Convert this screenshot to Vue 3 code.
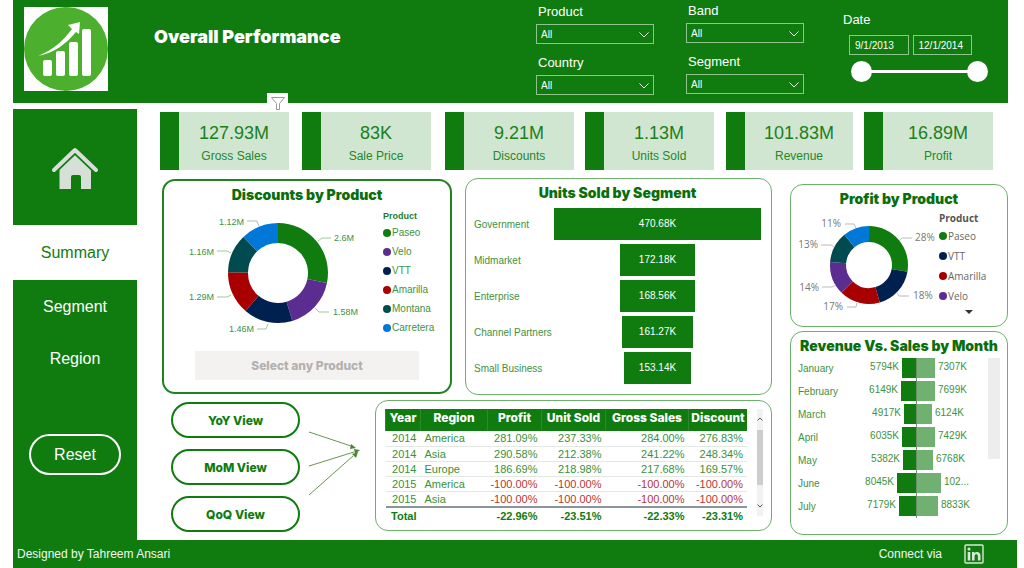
<script setup>
import { ref } from 'vue'

const colors = {
  Paseo: '#107c10',
  Velo: '#5c2d91',
  VTT: '#002050',
  Amarilla: '#a80000',
  Montana: '#004b50',
  Carretera: '#0078d7'
}

const filters = [
  [{ id: 'product', label: 'Product' }, { id: 'country', label: 'Country' }],
  [{ id: 'band', label: 'Band' }, { id: 'segment', label: 'Segment' }]
]

const from = ref('9/1/2013')
const to = ref('12/1/2014')

const kpis = [
  { value: '127.93M', label: 'Gross Sales' },
  { value: '83K', label: 'Sale Price' },
  { value: '9.21M', label: 'Discounts' },
  { value: '1.13M', label: 'Units Sold' },
  { value: '101.83M', label: 'Revenue' },
  { value: '16.89M', label: 'Profit' }
]

function slices(items, cx, cy, outer, inner) {
  const total = items.reduce((sum, item) => sum + item.value, 0)
  let angle = -Math.PI / 2
  const point = (r, a) => `${(cx + r * Math.cos(a)).toFixed(2)} ${(cy + r * Math.sin(a)).toFixed(2)}`
  return items.map((item) => {
    const end = angle + (item.value / total) * Math.PI * 2
    const d = `M${point(outer, angle)}A${outer} ${outer} 0 0 1 ${point(outer, end)}L${point(inner, end)}A${inner} ${inner} 0 0 0 ${point(inner, angle)}Z`
    angle = end
    return { ...item, d, fill: colors[item.name] }
  })
}

const discounts = slices([
  { name: 'Paseo', value: 2.6, text: '2.6M', x: 170, y: 36, anchor: 'start', line: '154,36 158,33 167,33' },
  { name: 'Velo', value: 1.58, text: '1.58M', x: 169, y: 110, anchor: 'start', line: '151,103 155,107 165,107' },
  { name: 'VTT', value: 1.46, text: '1.46M', x: 90, y: 127, anchor: 'end', line: '104,119 102,124 93,124' },
  { name: 'Amarilla', value: 1.29, text: '1.29M', x: 50, y: 95, anchor: 'end', line: '67,90 63,92 53,92' },
  { name: 'Montana', value: 1.16, text: '1.16M', x: 50, y: 50, anchor: 'end', line: '67,48 63,46 53,46' },
  { name: 'Carretera', value: 1.12, text: '1.12M', x: 80, y: 20, anchor: 'end', line: '95,21 93,16 83,16' }
], 114, 68, 50, 30)

const profits = slices([
  { name: 'Paseo', value: 28, text: '28%', x: 124, y: 34, anchor: 'start', line: '108,34 111,31 121,31' },
  { name: 'VTT', value: 18, text: '18%', x: 122, y: 92, anchor: 'start', line: '106,86 108,89 118,89' },
  { name: 'Amarilla', value: 17, text: '17%', x: 52, y: 103, anchor: 'end', line: '66,96 65,100 56,100' },
  { name: 'Velo', value: 14, text: '14%', x: 28, y: 84, anchor: 'end', line: '45,78 41,80 31,80' },
  { name: 'Montana', value: 13, text: '13%', x: 27, y: 41, anchor: 'end', line: '43,40 40,38 30,38' },
  { name: 'Carretera', value: 11, text: '11%', x: 50, y: 20, anchor: 'end', line: '65,21 63,17 54,17' }
], 78, 58, 39, 23)

const segments = [
  { name: 'Government', value: 470.68 },
  { name: 'Midmarket', value: 172.18 },
  { name: 'Enterprise', value: 168.56 },
  { name: 'Channel Partners', value: 161.27 },
  { name: 'Small Business', value: 153.14 }
]

const months = [
  { name: 'January', revenue: 5794, sales: 7307 },
  { name: 'February', revenue: 6149, sales: 7699 },
  { name: 'March', revenue: 4917, sales: 6124 },
  { name: 'April', revenue: 6035, sales: 7429 },
  { name: 'May', revenue: 5382, sales: 6768 },
  { name: 'June', revenue: 8045, sales: 10200, salesText: '102...' },
  { name: 'July', revenue: 7179, sales: 8833 }
]
const barWidth = (value) => `${Math.round(value / 417)}px`

const headers = ['Year', 'Region', 'Profit', 'Unit Sold', 'Gross Sales', 'Discount']
const rows = [
  ['2014', 'America', '281.09%', '237.33%', '284.00%', '276.83%'],
  ['2014', 'Asia', '290.58%', '212.38%', '241.22%', '248.34%'],
  ['2014', 'Europe', '186.69%', '218.98%', '217.68%', '169.57%'],
  ['2015', 'America', '-100.00%', '-100.00%', '-100.00%', '-100.00%'],
  ['2015', 'Asia', '-100.00%', '-100.00%', '-100.00%', '-100.00%']
]
const totals = ['Total', '', '-22.96%', '-23.51%', '-22.33%', '-23.31%']
const views = ['YoY View', 'MoM View', 'QoQ View']
</script>

<template>
  <div class="page">
    <header class="top">
      <svg class="logo" viewBox="0 0 84 84" aria-hidden="true">
        <rect width="84" height="84" fill="#fdfdfd" />
        <circle cx="42" cy="42" r="42" fill="#4caf2e" />
        <g fill="#fff">
          <rect x="19" y="53" width="9" height="16" rx="2" />
          <rect x="32" y="44" width="9" height="25" rx="2" />
          <rect x="45" y="35" width="9" height="34" rx="2" />
          <rect x="58" y="22" width="9" height="47" rx="2" />
          <path d="M14 49C29 43 39 34 48 22L44 18L56 15L55 27L52 25C42 37 30 46 14 49Z" />
        </g>
      </svg>
      <h1>Overall Performance</h1>
      <div class="filters">
        <div v-for="(column, i) in filters" :key="i" class="filter-column">
          <div v-for="filter in column" :key="filter.id" class="filter">
            <label :for="filter.id">{{ filter.label }}</label>
            <div class="select-wrap">
              <select :id="filter.id"><option>All</option></select>
              <svg viewBox="0 0 10 6" aria-hidden="true"><path d="M0.5 0.5L5 5L9.5 0.5" fill="none" stroke="#fff" /></svg>
            </div>
          </div>
        </div>
      </div>
      <div class="date">
        <label for="from">Date</label>
        <div class="date-inputs">
          <input id="from" v-model="from" type="text">
          <input v-model="to" type="text" aria-label="End date">
        </div>
        <div class="slider">
          <input type="range" min="0" max="100" value="0" aria-label="Range start">
          <input type="range" min="0" max="100" value="100" aria-label="Range end">
        </div>
      </div>
    </header>

    <div class="body">
      <nav class="side">
        <a href="#home" class="home" aria-label="Home">
          <svg viewBox="0 0 48 44" aria-hidden="true">
            <path d="M8.500 22L24 7L40 22V42H30V30Q30 28 28 28H22Q20 28 20 30V42H8.500Z" fill="#d6e0d6" />
            <path d="M3 24L24 4L45 24" fill="none" stroke="#107c10" stroke-width="6" />
            <path d="M3 23L24 3L45 23" fill="none" stroke="#dcdcdc" stroke-width="4" stroke-linecap="round" stroke-linejoin="round" />
          </svg>
        </a>
        <a href="#summary" class="current">Summary</a>
        <div class="rest">
          <a href="#segment">Segment</a>
          <a href="#region">Region</a>
          <button type="button">Reset</button>
        </div>
      </nav>

      <main>
        <section class="kpis">
          <article v-for="(kpi, i) in kpis" :key="kpi.label" class="kpi">
            <strong>{{ kpi.value }}</strong>
            <span>{{ kpi.label }}</span>
            <button v-if="i === 0" type="button" class="funnel-icon" aria-label="Filters">
              <svg viewBox="0 0 14 13"><path d="M0.5 0.5H13.5L8.5 6.5V12.5H5.5V6.5Z" fill="none" stroke="#999" /></svg>
            </button>
          </article>
        </section>

        <div class="dash">
          <div class="wide">
            <div class="charts">
              <section class="panel discounts">
                <h2>Discounts by Product</h2>
                <div class="donut-row">
                  <svg class="donut" viewBox="0 0 215 136" role="img" aria-label="Discounts by Product">
                    <g v-for="s in discounts" :key="s.name">
                      <path :d="s.d" :fill="s.fill" />
                      <polyline :points="s.line" />
                      <text :x="s.x" :y="s.y" :text-anchor="s.anchor">{{ s.text }}</text>
                    </g>
                  </svg>
                  <ul class="legend">
                    <li class="legend-title">Product</li>
                    <li v-for="s in discounts" :key="s.name"><i :style="{ background: s.fill }"></i>{{ s.name }}</li>
                  </ul>
                </div>
                <button type="button" class="select-product" disabled>Select any Product</button>
              </section>

              <section class="panel units">
                <h2>Units Sold by Segment</h2>
                <div v-for="s in segments" :key="s.name" class="funnel-row">
                  <span>{{ s.name }}</span>
                  <div class="funnel-track">
                    <div class="funnel-bar" :style="{ width: (s.value / 470.68) * 100 + '%' }">{{ s.value.toFixed(2) }}K</div>
                  </div>
                </div>
              </section>
            </div>

            <div class="lower">
              <div class="views">
                <button v-for="view in views" :key="view" type="button">{{ view }}</button>
              </div>
              <svg class="arrows" viewBox="0 0 56 76" aria-hidden="true">
                <g fill="none" stroke="#6a964f">
                  <path d="M4 7L46 21M4 41L49 27M4 70L48 31" />
                </g>
                <g fill="#4f8438">
                  <path d="M51 23L46 19L45 24ZM55 25L49 24L50 29ZM53 27L47 29L51 33Z" />
                </g>
              </svg>
              <section class="panel table-panel">
                <table>
                  <colgroup><col class="c-year"><col class="c-region"><col class="c-profit"><col class="c-unit"><col class="c-gross"><col class="c-discount"></colgroup>
                  <thead><tr><th v-for="h in headers" :key="h" scope="col">{{ h }}</th></tr></thead>
                  <tbody>
                    <tr v-for="(row, i) in rows" :key="i">
                      <td v-for="(cell, j) in row" :key="j" :class="{ negative: cell.startsWith('-') }">{{ cell }}</td>
                    </tr>
                  </tbody>
                  <tfoot><tr><td v-for="(cell, i) in totals" :key="i">{{ cell }}</td></tr></tfoot>
                </table>
                <div class="table-scroll" aria-hidden="true">
                  <svg viewBox="0 0 6 4"><path d="M0.5 3.5L3 1L5.5 3.5" /></svg>
                  <div class="thumb"></div>
                  <svg viewBox="0 0 6 4"><path d="M0.5 0.5L3 3L5.5 0.5" /></svg>
                </div>
              </section>
            </div>
          </div>

          <div class="narrow">
            <section class="panel profit">
              <h2>Profit by Product</h2>
              <div class="donut-row">
                <svg class="donut" viewBox="0 0 148 110" role="img" aria-label="Profit by Product">
                  <g v-for="s in profits" :key="s.name">
                    <path :d="s.d" :fill="s.fill" />
                    <polyline :points="s.line" />
                    <text :x="s.x" :y="s.y" :text-anchor="s.anchor">{{ s.text }}</text>
                  </g>
                </svg>
                <ul class="legend">
                  <li class="legend-title">Product</li>
                  <li v-for="s in profits.slice(0, 4)" :key="s.name"><i :style="{ background: s.fill }"></i>{{ s.name }}</li>
                  <li class="more"><svg viewBox="0 0 8 4" aria-hidden="true"><path d="M0 0H8L4 4Z" fill="#333" /></svg></li>
                </ul>
              </div>
            </section>

            <section class="panel revenue">
              <h2>Revenue Vs. Sales by Month</h2>
              <div class="tornado-wrap">
                <div class="tornado">
                  <div v-for="m in months" :key="m.name" class="month-row">
                    <span class="month">{{ m.name }}</span>
                    <div class="left">{{ m.revenue }}K<i :style="{ width: barWidth(m.revenue) }"></i></div>
                    <div class="right"><i :style="{ width: barWidth(m.sales) }"></i>{{ m.salesText || m.sales + 'K' }}</div>
                  </div>
                </div>
                <div class="month-scroll"></div>
              </div>
            </section>
          </div>
        </div>
      </main>
    </div>

    <footer>
      <span>Designed by Tahreem Ansari</span>
      <a href="#linkedin">Connect via
        <svg viewBox="0 0 20 20" aria-hidden="true">
          <rect x="1" y="1" width="18" height="18" rx="1" fill="none" stroke="#d8e8d8" stroke-width="1.4" />
          <g fill="#d8e8d8">
            <circle cx="5" cy="5" r="1.5" />
            <rect x="3.700" y="8" width="2.600" height="8.500" />
            <path d="M8 8H10.400V9.200C12 7 16.500 7.400 16.500 11.500V16.500H13.900V12C13.900 9.500 10.600 9.500 10.600 12V16.500H8Z" />
          </g>
        </svg>
      </a>
    </footer>
  </div>
</template>

<style>
html, body { background: #fff; }
</style>

<style scoped>
* { box-sizing: border-box; }

.page {
  --green: #107c10;
  --heavy: Inter, "Liberation Sans", sans-serif;
  min-height: 100vh;
  display: flex;
  flex-direction: column;
  padding: 0 7px 0 13px;
  font-family: "Liberation Sans", Arial, sans-serif;
  color: var(--green);
}
button, input, select { font-family: inherit; margin: 0; }
a { color: inherit; text-decoration: none; }
ul { list-style: none; margin: 0; padding: 0; }
h1, h2 { margin: 0; font-family: var(--heavy); font-weight: 900; }

.top {
  height: 103px;
  margin-right: 9px;
  background: var(--green);
  color: #fff;
  display: flex;
  align-items: flex-start;
}
.logo { width: 84px; height: 84px; margin: 7px 0 0 11px; }
h1 { margin: 26px 0 0 46px; font-size: 18px; line-height: 22px; }
.filters { display: flex; gap: 32px; margin-left: auto; }
.filter-column { width: 118px; padding-top: 4px; display: flex; flex-direction: column; gap: 11px; }
.filter-column + .filter-column { padding-top: 3px; }
.filter label { display: block; padding-left: 2px; font-size: 13px; line-height: 16px; margin-bottom: 4px; }
.select-wrap { position: relative; }
.select-wrap select {
  display: block;
  width: 100%;
  height: 20px;
  padding: 0 4px;
  appearance: none;
  background: transparent;
  border: 1px solid #8fc48f;
  border-radius: 0;
  color: #fff;
  font-size: 10px;
}
.select-wrap svg { position: absolute; right: 5px; top: 8px; width: 10px; height: 6px; }
.date { width: 145px; margin: 12px 20px 0 39px; }
.date label { display: block; font-size: 13px; line-height: 16px; }
.date-inputs { display: flex; gap: 4px; margin: 7px 16px 0 6px; }
.date-inputs input {
  min-width: 0;
  flex: 1;
  height: 20px;
  padding: 0 5px;
  background: transparent;
  border: 1px solid #8fc48f;
  color: #fff;
  font-size: 10px;
}
.slider { position: relative; height: 22px; margin: 5px 0 0 8px; }
.slider input {
  position: absolute;
  inset: 0;
  width: 100%;
  height: 22px;
  appearance: none;
  background: linear-gradient(#fff, #fff) center / 85% 3px no-repeat;
  pointer-events: none;
}
.slider input::-webkit-slider-thumb { appearance: none; width: 21px; height: 21px; border-radius: 50%; background: #fff; pointer-events: auto; }

.body { flex: 1; display: flex; padding-top: 6px; margin-right: 9px; }
.side { width: 124px; flex: none; display: flex; flex-direction: column; font-size: 16px; text-align: center; }
.home { height: 116px; padding-top: 4px; background: var(--green); display: flex; justify-content: center; align-items: center; }
.home svg { width: 48px; height: 44px; }
.current { line-height: 55px; }
.rest { flex: 1; padding-top: 1px; background: var(--green); color: #fff; display: flex; flex-direction: column; align-items: center; }
.rest a { line-height: 52px; width: 100%; }
.rest button {
  margin-top: 49px;
  width: 92px;
  height: 41px;
  border: 2px solid #fff;
  border-radius: 21px;
  background: transparent;
  color: #fff;
  font-size: 16px;
}

main { flex: 1; min-width: 0; padding: 3px 0 5px 23px; }
.kpis { display: grid; grid-template-columns: 142fr 143fr 140fr 141fr 138fr 130fr; margin-right: 14px; }
.kpi {
  position: relative;
  height: 58px;
  max-width: 129px;
  border-left: 19px solid var(--green);
  background: #d0e6d0;
  padding: 10px 0 0;
  display: flex;
  flex-direction: column;
  align-items: center;
  color: #25862a;
}
.kpi:not(:last-child) { margin-right: 11px; }
.kpi strong { font-size: 18px; line-height: 22px; font-weight: 400; color: #1b801b; }
.kpi span { font-size: 12px; line-height: 24px; }
.funnel-icon {
  position: absolute;
  right: 1px;
  top: -19px;
  width: 21px;
  height: 17px;
  padding: 4px 0 0;
  border: 0;
  background: #fff;
  display: flex;
  justify-content: center;
}
.funnel-icon svg { width: 14px; height: 13px; }

.dash { display: grid; grid-template-columns: 610fr 218fr; gap: 18px; padding: 8px 0 0 2px; }
.panel { border: 1px solid #6bb06b; border-radius: 13px; background: #fff; }
h2 { font-size: 14px; line-height: 16px; text-align: center; color: #0a6e0a; white-space: nowrap; }

.charts { display: grid; grid-template-columns: 290fr 307fr; gap: 13px; align-items: center; }
.discounts { height: 215px; border: 2px solid #1f841f; padding-top: 6px; }
.donut-row { display: flex; }
.donut { display: block; overflow: visible; }
.donut polyline { fill: none; stroke: #9cc99c; }
.donut text { font-size: 9px; fill: #3e923e; }
.discounts .donut { width: 215px; height: 136px; margin-top: 2px; }
.legend { font-size: 10px; color: #3e923e; white-space: nowrap; }
.legend li { display: flex; align-items: center; gap: 1px; }
.legend i { width: 8px; height: 8px; border-radius: 50%; }
.legend .legend-title { font-weight: 700; color: #1f7f1f; }
.discounts .legend { margin: 6px 0 0 4px; }
.discounts .legend li { height: 19px; }
.discounts .legend .legend-title { height: 14px; font-size: 9px; }
.select-product {
  display: block;
  width: 78%;
  height: 29px;
  margin: 10px auto 0;
  border: 0;
  background: #f3f2f1;
  color: #b3b0ad;
  font-family: var(--heavy);
  font-weight: 800;
  font-size: 12px;
}

.units { height: 217px; padding: 6px 10px 0 8px; }
.units h2 { margin-bottom: 7px; }
.funnel-row { display: grid; grid-template-columns: 80px 1fr; height: 32px; margin-bottom: 4px; align-items: center; font-size: 10px; white-space: nowrap; color: #3e923e; }
.funnel-bar { height: 32px; line-height: 32px; margin: 0 auto; background: var(--green); color: #fff; text-align: center; }

.lower { display: flex; align-items: flex-start; padding-top: 5px; }
.views { flex: none; margin: 2px 5px 0 9px; display: flex; flex-direction: column; gap: 11px; }
.views button {
  width: 129px;
  height: 36px;
  border: 2px solid var(--green);
  border-radius: 18px;
  background: #fff;
  color: var(--green);
  font-family: var(--heavy);
  font-weight: 800;
  font-size: 12px;
}
.arrows { flex: none; width: 56px; height: 76px; margin-top: 25px; }
.table-panel { flex: 1; min-width: 0; height: 131px; margin-left: 14px; padding: 8px 8px 0 9px; display: flex; justify-content: space-between; }
table { width: 362px; table-layout: fixed; border-collapse: collapse; font-size: 11px; align-self: flex-start; }
.c-year { width: 35px; } .c-region { width: 67px; } .c-profit { width: 54px; } .c-unit { width: 64px; } .c-gross { width: 83px; }
th { height: 22px; padding: 0 0 5px; background: var(--green); color: #fff; font-family: var(--heavy); font-weight: 800; font-size: 12px; line-height: 16px; white-space: nowrap; border-left: 1px solid #2b8b2b; }
td { height: 15px; padding: 0 4px 0 0; line-height: 14px; text-align: right; color: #3a903a; border-bottom: 1px solid #e3e8e3; }
td:nth-child(2) { text-align: left; padding-left: 4px; }
.negative { color: #b83535; }
tfoot td { height: 17px; border-bottom: 0; border-top: 2px solid #8a969c; color: #107c10; font-weight: 700; }
.table-scroll { width: 6px; height: 107px; background: #f2f2f2; display: flex; flex-direction: column; align-items: center; padding: 8px 0; }
.table-scroll svg { width: 6px; height: 4px; fill: none; stroke: #555; }
.thumb { width: 6px; height: 55px; margin: 9px 0 auto; background: #cdcdcd; }

.narrow { padding-top: 6px; }
.profit { height: 143px; padding-top: 6px; }
.profit .donut { width: 148px; height: 110px; }
.profit .donut text { font-family: "Open Sans", sans-serif; fill: #777; font-size: 10px; }
.profit .donut polyline { stroke: #bbb; }
.profit .legend { font-family: "Open Sans", sans-serif; font-size: 10px; color: #666; margin-top: 3px; }
.profit .legend li { height: 20px; }
.profit .legend .legend-title { height: 16px; color: #555; }
.profit .legend .more { height: 12px; padding-left: 26px; }
.more svg { width: 8px; height: 4px; }
.revenue { height: 204px; margin-top: 4px; padding: 6px 7px 0; }
.tornado-wrap { display: flex; justify-content: space-between; padding-top: 4px; }
.tornado { flex: 1; font-size: 10px; color: #3e923e; }
.month-row { display: grid; grid-template-columns: 50px 69px 1fr; height: 23px; }
.month-row:last-child { height: 20px; }
.month { line-height: 22px; }
.left, .right { display: flex; gap: 3px; line-height: 18px; white-space: nowrap; }
.left { justify-content: flex-end; border-right: 1px solid #6f8f6f; }
.left i, .right i { flex: none; height: 20px; }
.left i { background: var(--green); }
.right i { background: #70b070; }
.month-scroll { width: 12px; height: 101px; background: #ededed; }

footer {
  height: 28px;
  display: flex;
  align-items: center;
  justify-content: space-between;
  padding: 0 33px 0 4px;
  background: var(--green);
  color: #f0f7f0;
  font-size: 12px;
}
footer a { display: flex; align-items: center; gap: 22px; }
footer svg { width: 20px; height: 20px; }
</style>
